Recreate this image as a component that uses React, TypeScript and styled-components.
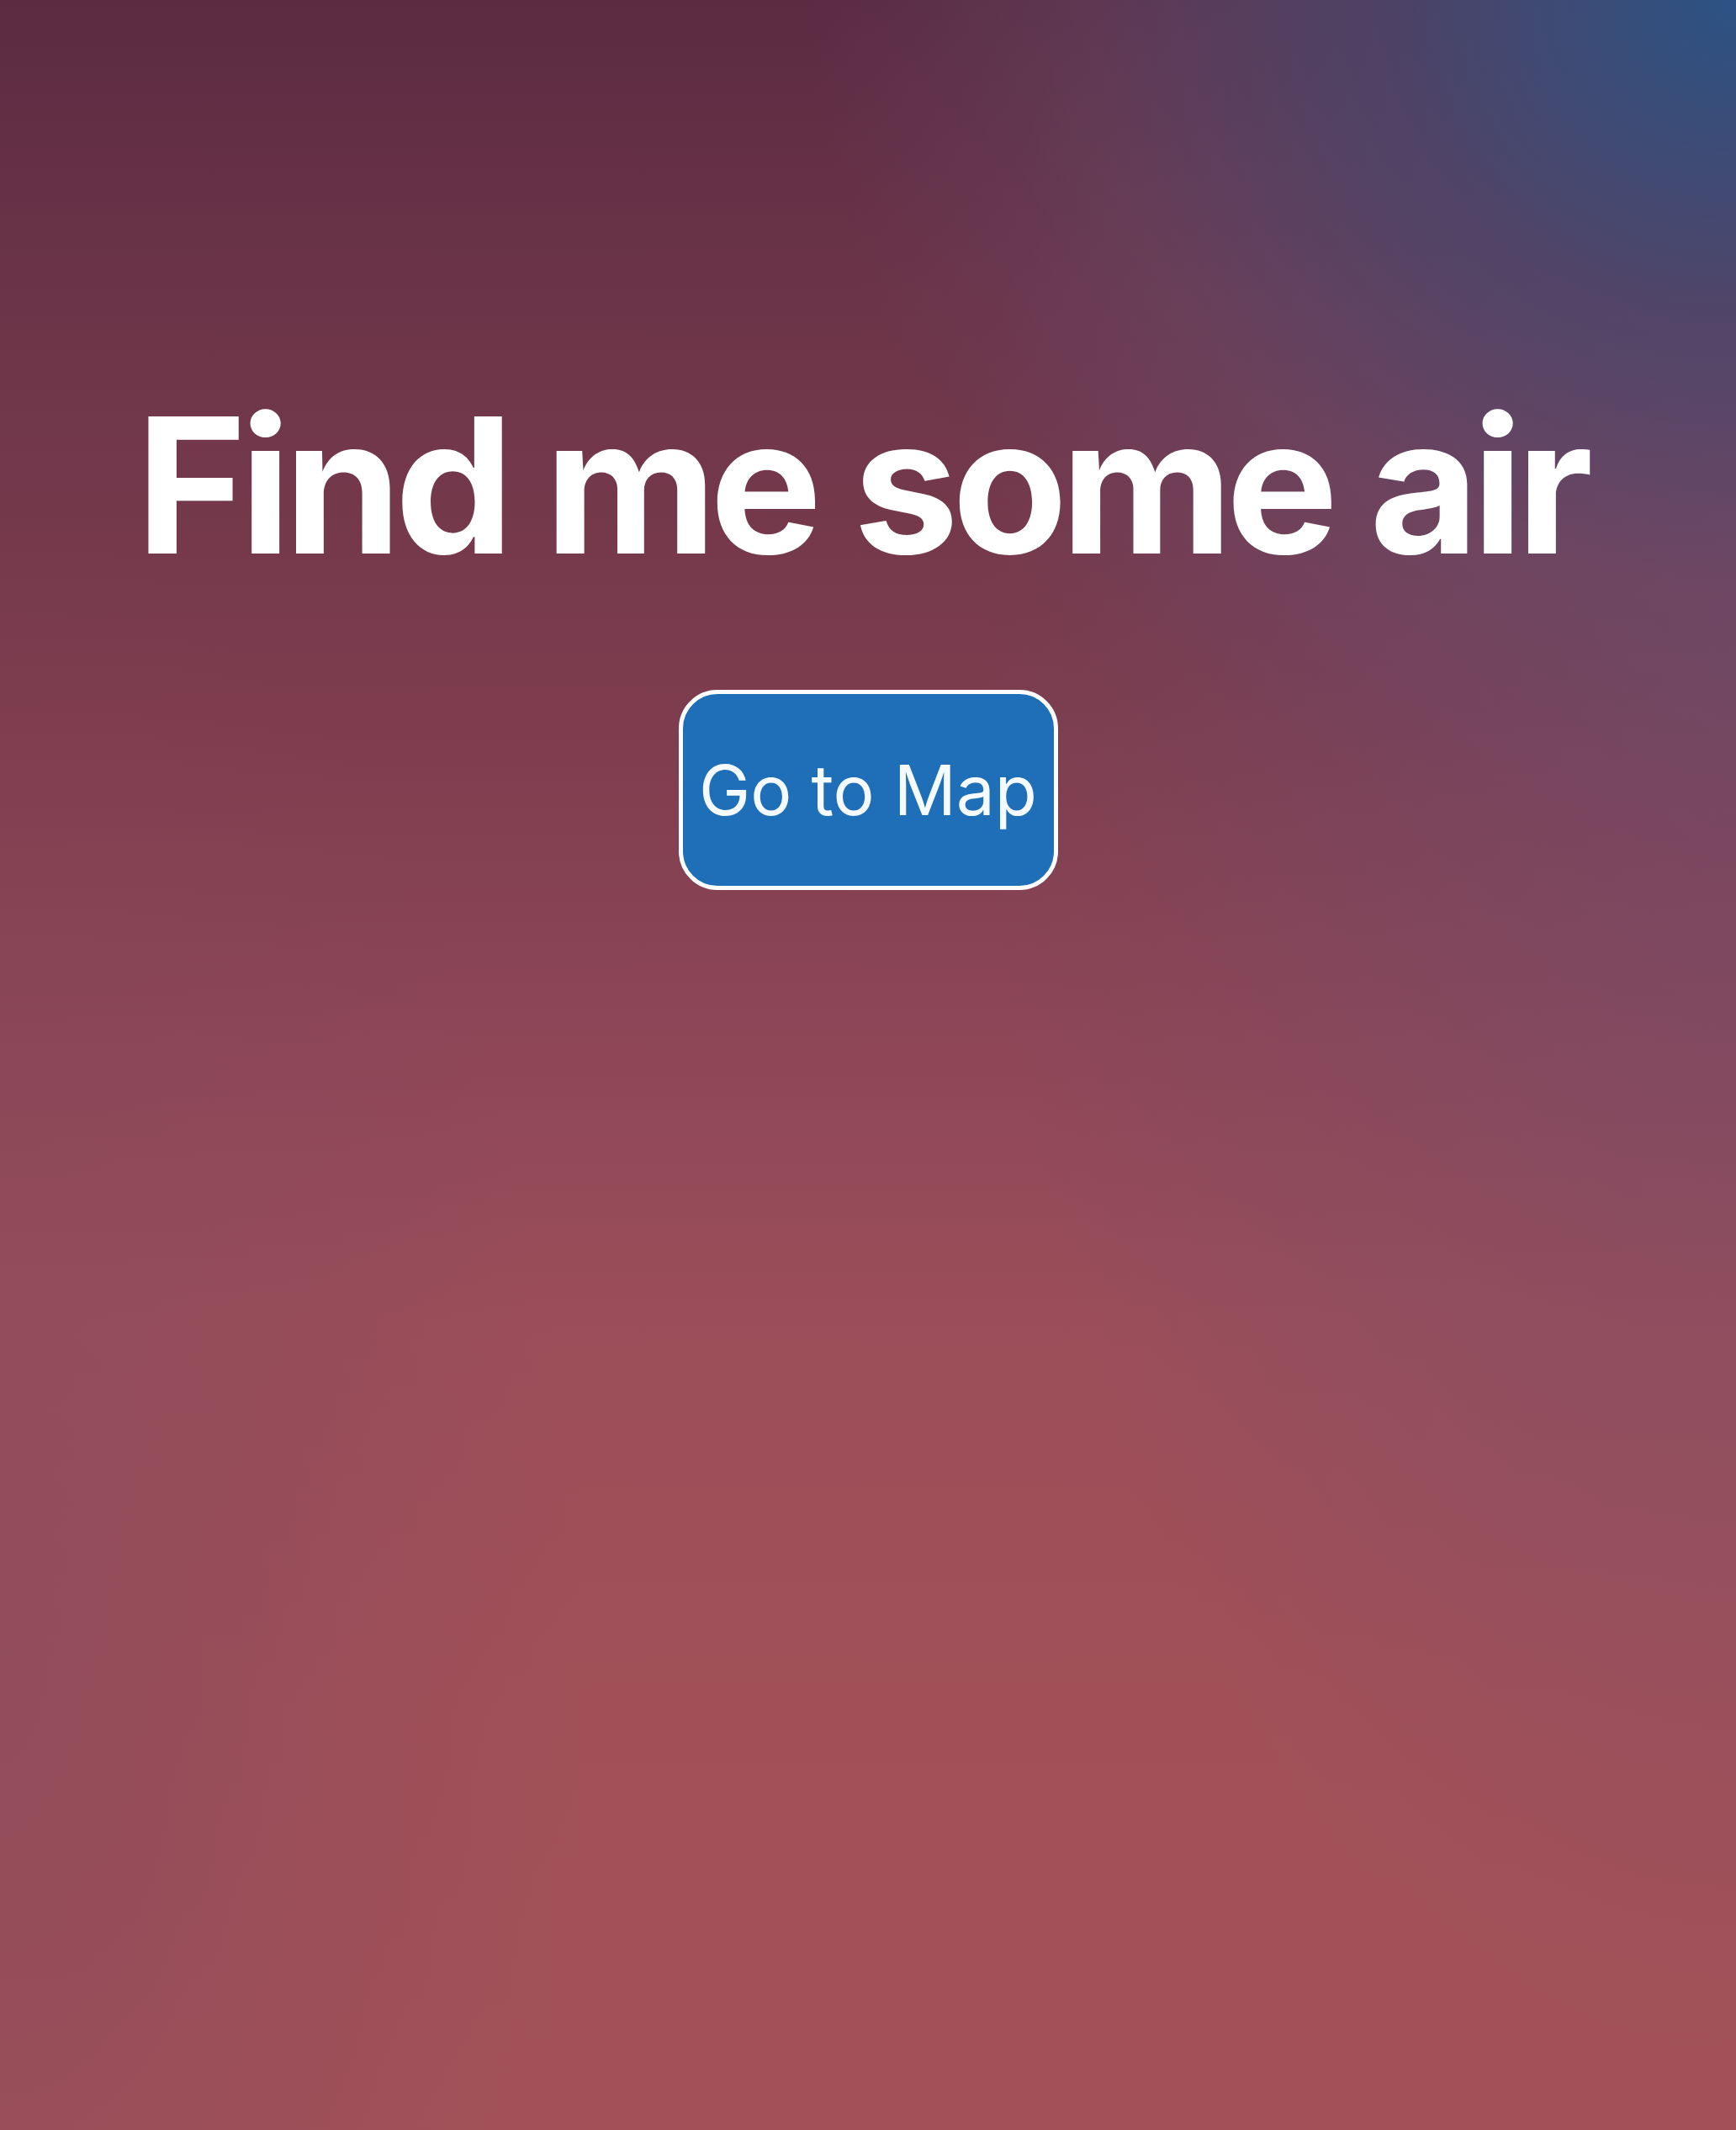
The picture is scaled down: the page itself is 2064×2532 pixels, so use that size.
import React from "react";
import styled, { createGlobalStyle } from "styled-components";

const Global = createGlobalStyle`
  html, body { margin: 0; padding: 0; }
  body { font-family: Inter, "Noto Sans", sans-serif; }
`;

const Page = styled.main`
  min-height: 2532px;
  box-sizing: border-box;
  display: flex;
  flex-direction: column;
  align-items: center;
  padding-top: 465px;
  background:
    radial-gradient(ellipse 1100px 1000px at 100% 0%, rgba(44, 83, 132, 1) 0%, rgba(68, 72, 112, 0.75) 35%, rgba(100, 76, 110, 0.35) 70%, rgba(110, 76, 105, 0) 100%),
    radial-gradient(ellipse 900px 1700px at 100% 30%, rgba(112, 78, 110, 0.55) 0%, rgba(112, 78, 110, 0) 100%),
    radial-gradient(ellipse 700px 1400px at 0% 80%, rgba(128, 72, 92, 0.45) 0%, rgba(128, 72, 92, 0) 100%),
    linear-gradient(180deg, #5b2b42 0%, #6c3448 14%, #7b3c4e 32%, #8f4757 50%, #9b4e59 62%, #a15058 80%, #a35158 100%);
`;

const Title = styled.h1`
  margin: 0;
  padding-right: 16px;
  font-family: Inter, "Noto Sans", sans-serif;
  font-weight: 700;
  font-size: 224px;
  line-height: 1;
  color: #ffffff;
  letter-spacing: -8px;
  white-space: nowrap;
`;

const MapButton = styled.button`
  margin-top: 131px;
  width: 451px;
  height: 238px;
  box-sizing: border-box;
  display: flex;
  align-items: center;
  justify-content: center;
  background: #1f6fb8;
  border: 5px solid #ffffff;
  border-radius: 46px;
  color: #f4faff;
  font-family: Inter, "Noto Sans", sans-serif;
  font-weight: 400;
  font-size: 82px;
  padding: 0;
  cursor: pointer;
  white-space: nowrap;
`;

export default function App() {
  return (
    <>
      <Global />
      <Page>
        <Title>Find me some air</Title>
        <MapButton type="button">Go to Map</MapButton>
      </Page>
    </>
  );
}
